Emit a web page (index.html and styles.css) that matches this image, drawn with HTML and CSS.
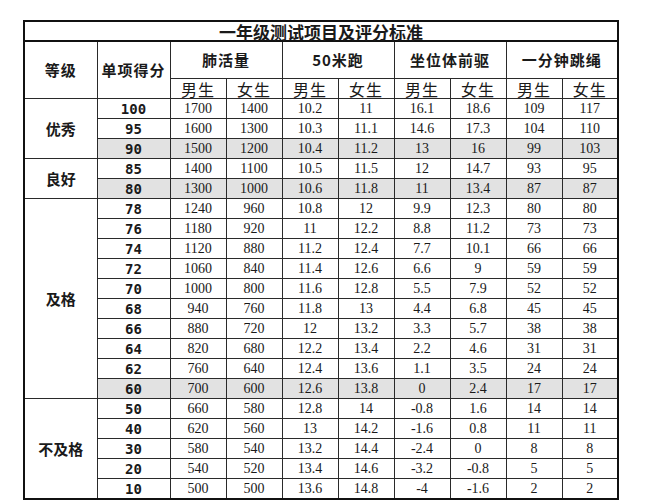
FILE: index.html
```html
<!DOCTYPE html>
<html lang="zh">
<head>
<meta charset="utf-8">
<link rel="stylesheet" href="styles.css">
</head>
<body>
<table class="score">
  <colgroup>
    <col class="c-grade"><col class="c-pts">
    <col class="c-v"><col class="c-v"><col class="c-v"><col class="c-v">
    <col class="c-v"><col class="c-v"><col class="c-v"><col class="c-v">
  </colgroup>
  <thead>
    <tr class="r-title"><th colspan="10">一年级测试项目及评分标准</th></tr>
    <tr class="r-group">
      <th rowspan="2" class="h-main">等级</th>
      <th rowspan="2" class="h-main">单项得分</th>
      <th colspan="2" class="h-item">肺活量</th>
      <th colspan="2" class="h-item">50米跑</th>
      <th colspan="2" class="h-item">坐位体前驱</th>
      <th colspan="2" class="h-item">一分钟跳绳</th>
    </tr>
    <tr class="r-sub">
      <th>男生</th><th>女生</th><th>男生</th><th>女生</th>
      <th>男生</th><th>女生</th><th>男生</th><th>女生</th>
    </tr>
  </thead>
  <tbody>
    <tr><td rowspan="3" class="grade">优秀</td><td class="pts">100</td><td>1700</td><td>1400</td><td>10.2</td><td>11</td><td>16.1</td><td>18.6</td><td>109</td><td>117</td></tr>
    <tr><td class="pts">95</td><td>1600</td><td>1300</td><td>10.3</td><td>11.1</td><td>14.6</td><td>17.3</td><td>104</td><td>110</td></tr>
    <tr class="shade"><td class="pts">90</td><td>1500</td><td>1200</td><td>10.4</td><td>11.2</td><td>13</td><td>16</td><td>99</td><td>103</td></tr>
    <tr><td rowspan="2" class="grade">良好</td><td class="pts">85</td><td>1400</td><td>1100</td><td>10.5</td><td>11.5</td><td>12</td><td>14.7</td><td>93</td><td>95</td></tr>
    <tr class="shade"><td class="pts">80</td><td>1300</td><td>1000</td><td>10.6</td><td>11.8</td><td>11</td><td>13.4</td><td>87</td><td>87</td></tr>
    <tr><td rowspan="10" class="grade">及格</td><td class="pts">78</td><td>1240</td><td>960</td><td>10.8</td><td>12</td><td>9.9</td><td>12.3</td><td>80</td><td>80</td></tr>
    <tr><td class="pts">76</td><td>1180</td><td>920</td><td>11</td><td>12.2</td><td>8.8</td><td>11.2</td><td>73</td><td>73</td></tr>
    <tr><td class="pts">74</td><td>1120</td><td>880</td><td>11.2</td><td>12.4</td><td>7.7</td><td>10.1</td><td>66</td><td>66</td></tr>
    <tr><td class="pts">72</td><td>1060</td><td>840</td><td>11.4</td><td>12.6</td><td>6.6</td><td>9</td><td>59</td><td>59</td></tr>
    <tr><td class="pts">70</td><td>1000</td><td>800</td><td>11.6</td><td>12.8</td><td>5.5</td><td>7.9</td><td>52</td><td>52</td></tr>
    <tr><td class="pts">68</td><td>940</td><td>760</td><td>11.8</td><td>13</td><td>4.4</td><td>6.8</td><td>45</td><td>45</td></tr>
    <tr><td class="pts">66</td><td>880</td><td>720</td><td>12</td><td>13.2</td><td>3.3</td><td>5.7</td><td>38</td><td>38</td></tr>
    <tr><td class="pts">64</td><td>820</td><td>680</td><td>12.2</td><td>13.4</td><td>2.2</td><td>4.6</td><td>31</td><td>31</td></tr>
    <tr><td class="pts">62</td><td>760</td><td>640</td><td>12.4</td><td>13.6</td><td>1.1</td><td>3.5</td><td>24</td><td>24</td></tr>
    <tr class="shade"><td class="pts">60</td><td>700</td><td>600</td><td>12.6</td><td>13.8</td><td>0</td><td>2.4</td><td>17</td><td>17</td></tr>
    <tr><td rowspan="5" class="grade">不及格</td><td class="pts">50</td><td>660</td><td>580</td><td>12.8</td><td>14</td><td>-0.8</td><td>1.6</td><td>14</td><td>14</td></tr>
    <tr><td class="pts">40</td><td>620</td><td>560</td><td>13</td><td>14.2</td><td>-1.6</td><td>0.8</td><td>11</td><td>11</td></tr>
    <tr><td class="pts">30</td><td>580</td><td>540</td><td>13.2</td><td>14.4</td><td>-2.4</td><td>0</td><td>8</td><td>8</td></tr>
    <tr><td class="pts">20</td><td>540</td><td>520</td><td>13.4</td><td>14.6</td><td>-3.2</td><td>-0.8</td><td>5</td><td>5</td></tr>
    <tr><td class="pts">10</td><td>500</td><td>500</td><td>13.6</td><td>14.8</td><td>-4</td><td>-1.6</td><td>2</td><td>2</td></tr>
  </tbody>
</table>
</body>
</html>
```

FILE: styles.css
```css
html, body {
  margin: 0;
  padding: 0;
  background: #fff;
}

body {
  padding: 20px 0 0 23px;
}

.score {
  border-collapse: collapse;
  table-layout: fixed;
  width: 595px;
  border: 2px solid #111;
  color: #1a1a1a;
  font-family: "Liberation Serif", "Noto Sans CJK SC", serif;
}

.c-grade { width: 73px; }
.c-pts { width: 73px; }
.c-v { width: 56px; }

.score th,
.score td {
  border: 1px solid #2a2a2a;
  padding: 0;
  text-align: center;
  vertical-align: middle;
  white-space: nowrap;
}

.score th {
  font-family: "Noto Sans CJK SC", "Noto Sans", sans-serif;
}

.r-title th {
  height: 18px;
  font-size: 17px;
  font-weight: 700;
  line-height: 17px;
  border-bottom: 2px solid #111;
}

.r-group th {
  height: 36px;
}

.h-main,
.h-item {
  font-size: 15px;
  font-weight: 700;
  letter-spacing: 1px;
  line-height: 16px;
}

.r-sub th {
  height: 19px;
  font-size: 16px;
  font-weight: 400;
  line-height: 16px;
  letter-spacing: 1px;
}

.score tbody td {
  height: 19px;
  font-size: 14px;
  line-height: 16px;
}

.score tbody td.grade {
  font-family: "Noto Sans CJK SC", sans-serif;
  font-size: 15px;
  font-weight: 700;
  background: #fff;
}

.score tbody td.pts {
  font-family: "DejaVu Sans Mono", monospace;
  font-weight: 700;
  font-size: 14px;
}

.shade td {
  background: #e2e2e2;
}
```
